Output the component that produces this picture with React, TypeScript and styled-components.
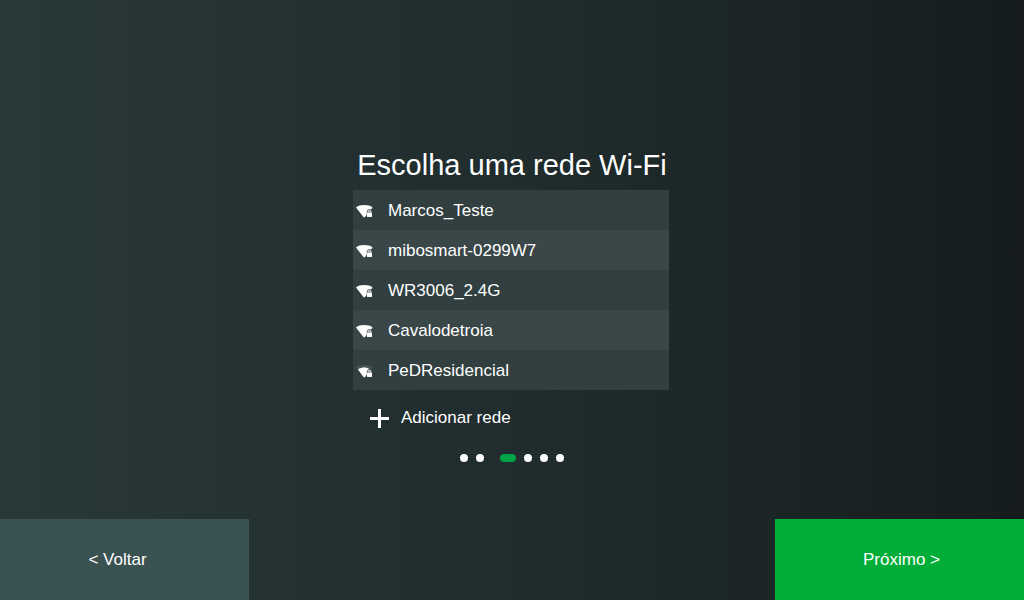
import React from "react";
import styled, { createGlobalStyle } from "styled-components";

const GlobalStyle = createGlobalStyle`
  *, *::before, *::after { box-sizing: border-box; }
  body {
    margin: 0;
    background: #1f2a2b;
    color: #fff;
    font-family: "Liberation Sans", Arial, sans-serif;
    font-size: 17px;
    line-height: 20px;
  }
  button { font: inherit; color: inherit; border: 0; padding: 0; cursor: pointer; }
`;

const Screen = styled.div`
  display: flex;
  flex-direction: column;
  min-height: 100vh;
  background: linear-gradient(90deg, #293838 0%, #202c2d 50%, #1b2526 75%, #161c1e 100%);
`;

const Content = styled.main`
  flex: 1;
  display: flex;
  flex-direction: column;
  align-items: center;
  padding: 148px 16px 16px;
`;

const Panel = styled.div`
  display: flex;
  flex-direction: column;
  width: 100%;
  max-width: 318px;
  padding-right: 2px;
`;

const Title = styled.h1`
  margin: 0 0 8px;
  padding-left: 2px;
  font-size: 29px;
  line-height: 34px;
  font-weight: 400;
  text-align: center;
  white-space: nowrap;
`;

const NetworkList = styled.ul`
  list-style: none;
  margin: 0;
  padding: 0;
`;

const NetworkItem = styled.li`
  background: #313f40;
  &:nth-child(even) { background: #394748; }
`;

const NetworkButton = styled.button`
  display: flex;
  align-items: center;
  gap: 14px;
  width: 100%;
  height: 40px;
  padding: 2px 4px 0 3px;
  background: none;
  text-align: left;
`;

const AddButton = styled.button`
  display: flex;
  align-items: center;
  align-self: flex-start;
  gap: 12px;
  height: 40px;
  margin: 8px 0 0 17px;
  background: none;
`;

const Steps = styled.div`
  display: flex;
  gap: 8px;
  margin-top: 16px;
`;

const Dot = styled.span<{ $active: boolean }>`
  width: ${(p) => (p.$active ? 16 : 8)}px;
  height: 8px;
  margin-left: ${(p) => (p.$active ? 8 : 0)}px;
  border-radius: 4px;
  background: ${(p) => (p.$active ? "#00a24a" : "#fff")};
`;

const Footer = styled.footer`
  display: flex;
  justify-content: space-between;
`;

const NavButton = styled.button<{ $primary?: boolean }>`
  flex: 0 1 249px;
  height: 81px;
  padding: ${(p) => (p.$primary ? "0 0 0 4px" : "0 14px 0 0")};
  background: ${(p) => (p.$primary ? "#00ad38" : "#3b5252")};
`;

function WifiIcon({ weak }: { weak: boolean }) {
  return (
    <svg width="18" height="16" viewBox="0 0 18 16" aria-hidden="true">
      <path
        d="M0 4.4C4 1.2 12.6 1.2 16.6 4.4L15.4 6.2H12.4L10.8 8V11.6L9 14.2H7.6Z"
        fill="#fff"
        fillOpacity={weak ? 0.1 : 1}
      />
      {weak && <path d="M2 6.6C5.4 4 11.2 4 13.4 6.2H12.4L10.8 8V11.6L9 14.2H7.6Z" fill="#fff" />}
      <path d="M12 10V8.6A1.5 1.4 0 0 1 15 8.6V10" fill="#8b9494" stroke="#e8ebeb" strokeWidth="1" />
      <rect x="11" y="9.8" width="5" height="4.2" rx="0.4" fill="#fff" />
    </svg>
  );
}

function PlusIcon() {
  return (
    <svg width="19" height="19" viewBox="0 0 19 19" aria-hidden="true">
      <path d="M8 0h3v8h8v3h-8v8h-3v-8h-8v-3h8z" fill="#fff" />
    </svg>
  );
}

const networks = [
  { name: "Marcos_Teste", weak: false },
  { name: "mibosmart-0299W7", weak: false },
  { name: "WR3006_2.4G", weak: false },
  { name: "Cavalodetroia", weak: false },
  { name: "PeDResidencial", weak: true },
];

const stepCount = 6;
const currentStep = 2;

export default function App() {
  return (
    <>
      <GlobalStyle />
      <Screen>
        <Content>
          <Panel>
            <Title>Escolha uma rede Wi-Fi</Title>
            <NetworkList>
              {networks.map((n) => (
                <NetworkItem key={n.name}>
                  <NetworkButton type="button">
                    <WifiIcon weak={n.weak} />
                    <span>{n.name}</span>
                  </NetworkButton>
                </NetworkItem>
              ))}
            </NetworkList>
            <AddButton type="button">
              <PlusIcon />
              <span>Adicionar rede</span>
            </AddButton>
          </Panel>
          <Steps>
            {Array.from({ length: stepCount }, (_, i) => (
              <Dot key={i} $active={i === currentStep} />
            ))}
          </Steps>
        </Content>
        <Footer>
          <NavButton type="button">&lt; Voltar</NavButton>
          <NavButton type="button" $primary>
            Próximo &gt;
          </NavButton>
        </Footer>
      </Screen>
    </>
  );
}
